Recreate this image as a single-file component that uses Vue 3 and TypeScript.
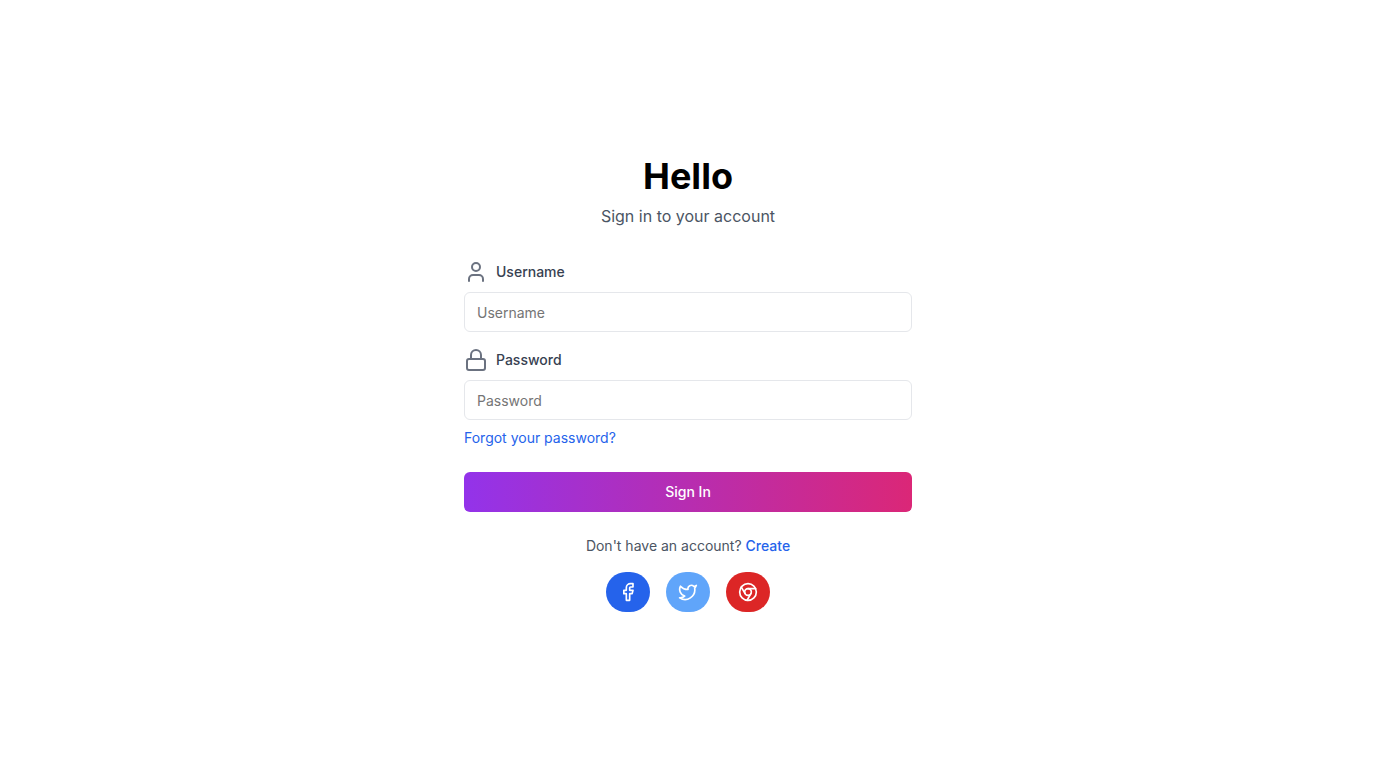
<script setup lang="ts">
import { ref } from 'vue'

const username = ref<string>('')
const password = ref<string>('')
</script>

<template>
  <main class="page">
    <div class="panel">
      <header class="heading">
        <h1>Hello</h1>
        <p>Sign in to your account</p>
      </header>

      <form class="form" @submit.prevent>
        <div class="field">
          <label for="username">
            <svg class="icon" viewBox="0 0 24 24" aria-hidden="true">
              <path d="M19 21v-2a4 4 0 0 0-4-4H9a4 4 0 0 0-4 4v2" />
              <circle cx="12" cy="7" r="4" />
            </svg>
            <span>Username</span>
          </label>
          <input id="username" v-model="username" type="text" placeholder="Username" />
        </div>
        <div class="field">
          <label for="password">
            <svg class="icon" viewBox="0 0 24 24" aria-hidden="true">
              <rect x="3" y="11" width="18" height="11" rx="2" />
              <path d="M7 11V7a5 5 0 0 1 10 0v4" />
            </svg>
            <span>Password</span>
          </label>
          <input id="password" v-model="password" type="password" placeholder="Password" />
          <a class="forgot" href="#">Forgot your password?</a>
        </div>
        <button class="submit" type="submit">Sign In</button>
      </form>

      <footer class="footer">
        <p>Don't have an account? <a href="#">Create</a></p>
        <div class="social">
          <button class="facebook" type="button" aria-label="Facebook">
            <svg viewBox="0 0 24 24" aria-hidden="true">
              <path d="M18 2h-3a5 5 0 0 0-5 5v3H7v4h3v8h4v-8h3l1-4h-4V7a1 1 0 0 1 1-1h3z" />
            </svg>
          </button>
          <button class="twitter" type="button" aria-label="Twitter">
            <svg viewBox="0 0 24 24" aria-hidden="true">
              <path d="M22 4s-.7 2.1-2 3.4c1.6 10-9.4 17.3-18 11.6 2.2.1 4.4-.6 6-2C3 15.5.5 9.6 3 5c2.2 2.6 5.6 4.1 9 4-.9-4.2 4-6.6 7-3.8 1.1 0 3-1.2 3-1.2z" />
            </svg>
          </button>
          <button class="chrome" type="button" aria-label="Chrome">
            <svg viewBox="0 0 24 24" aria-hidden="true">
              <circle cx="12" cy="12" r="10" />
              <circle cx="12" cy="12" r="4" />
              <path d="M21.17 8H12M3.95 6.06 8.54 14M10.88 21.94 15.46 14" />
            </svg>
          </button>
        </div>
      </footer>
    </div>
  </main>
</template>

<style scoped>
.page {
  box-sizing: border-box;
  min-height: 100vh;
  display: flex;
  align-items: center;
  justify-content: center;
  padding: 16px;
  background: #fff;
  color: #000;
  font: 14px/20px Inter, "Liberation Sans", sans-serif;
}

.panel {
  width: 100%;
  max-width: 448px;
}

.heading {
  text-align: center;
  margin-bottom: 32px;
}

h1 {
  margin: 0 0 8px;
  font-size: 36px;
  line-height: 40px;
  font-weight: 700;
}

p {
  margin: 0;
  color: #4b5563;
}

.heading p {
  font-size: 16px;
  line-height: 24px;
}

.form {
  display: flex;
  flex-direction: column;
  gap: 16px;
}

.field {
  display: flex;
  flex-direction: column;
  gap: 8px;
}

label {
  display: flex;
  align-items: center;
  gap: 8px;
  color: #374151;
  font-weight: 500;
}

svg {
  fill: none;
  stroke: currentColor;
  stroke-width: 2;
  stroke-linecap: round;
  stroke-linejoin: round;
}

.icon {
  width: 24px;
  height: 24px;
  color: #6b7280;
}

input {
  box-sizing: border-box;
  width: 100%;
  height: 40px;
  padding: 8px 12px;
  border: 1px solid #e5e7eb;
  border-radius: 6px;
  background: #fff;
  color: #000;
  font: inherit;
}

input::placeholder {
  color: #757575;
}

.forgot {
  align-self: flex-start;
  color: #2563eb;
}

a {
  text-decoration: none;
}

button {
  border: 0;
  color: #fff;
  font: inherit;
  cursor: pointer;
}

.submit {
  height: 40px;
  margin-top: 8px;
  border-radius: 6px;
  background: linear-gradient(to right, #9333ea, #db2777);
  font-weight: 500;
}

.footer {
  margin-top: 24px;
  text-align: center;
}

.footer a {
  color: #2563eb;
  font-weight: 500;
}

.social {
  display: flex;
  justify-content: center;
  gap: 16px;
  margin-top: 16px;
}

.social button {
  width: 44px;
  height: 40px;
  display: flex;
  align-items: center;
  justify-content: center;
  padding: 0;
  border-radius: 20px;
}

.social svg {
  width: 20px;
  height: 20px;
}

.facebook {
  background: #2563eb;
}

.twitter {
  background: #60a5fa;
}

.chrome {
  background: #dc2626;
}
</style>

<style>
body {
  margin: 0;
}
</style>
